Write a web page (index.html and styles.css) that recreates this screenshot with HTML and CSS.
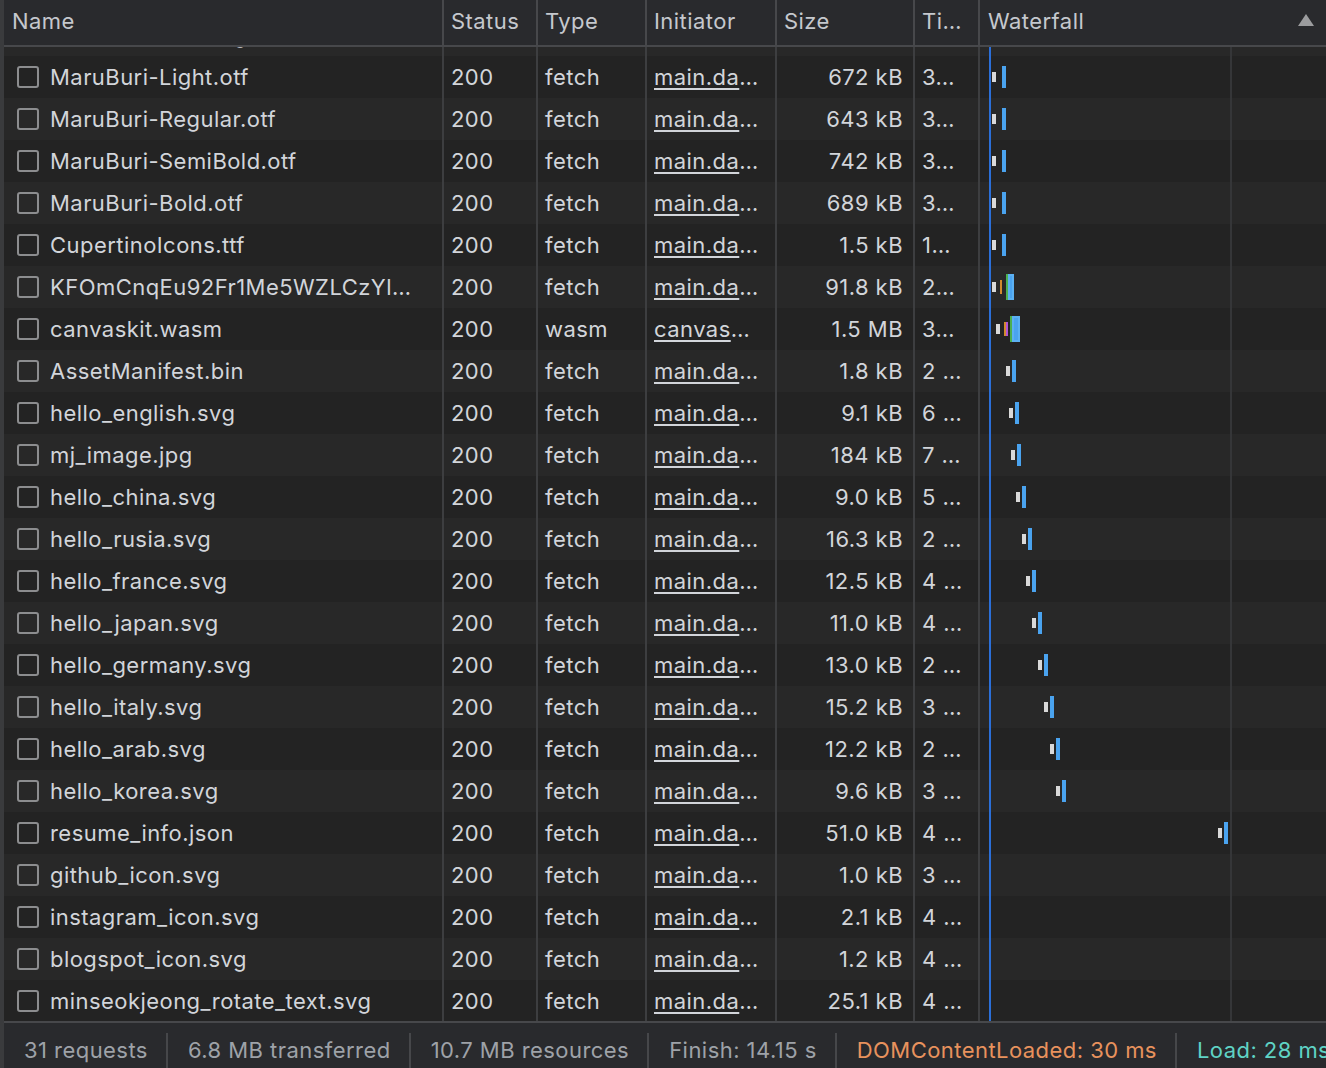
FILE: index.html
```html
<!DOCTYPE html>
<html>
<head>
<meta charset="utf-8">
<link rel="stylesheet" href="styles.css">
</head>
<body>
<div class="panel">
  <div class="row head">
    <div class="c name">Name</div>
    <div class="c status">Status</div>
    <div class="c type">Type</div>
    <div class="c init">Initiator</div>
    <div class="c hsize">Size</div>
    <div class="c time">Ti…</div>
    <div class="c wf">Waterfall<span class="sort"></span></div>
  </div>
  <div class="body">
    <div class="rows">
      <div class="row"><div class="c name"><span class="cb"></span>MaruBuri-ExtraLight.otf</div><div class="c status"></div><div class="c type"></div><div class="c init"></div><div class="c size"></div><div class="c time"></div><div class="c wf"></div></div>
      <div class="row"><div class="c name"><span class="cb"></span>MaruBuri-Light.otf</div><div class="c status">200</div><div class="c type">fetch</div><div class="c init"><span class="lk">main.da</span>…</div><div class="c size">672 kB</div><div class="c time">3…</div><div class="c wf"><i class="b w" style="left:12px"></i><i class="b r" style="left:22px"></i></div></div>
      <div class="row"><div class="c name"><span class="cb"></span>MaruBuri-Regular.otf</div><div class="c status">200</div><div class="c type">fetch</div><div class="c init"><span class="lk">main.da</span>…</div><div class="c size">643 kB</div><div class="c time">3…</div><div class="c wf"><i class="b w" style="left:12px"></i><i class="b r" style="left:22px"></i></div></div>
      <div class="row"><div class="c name"><span class="cb"></span>MaruBuri-SemiBold.otf</div><div class="c status">200</div><div class="c type">fetch</div><div class="c init"><span class="lk">main.da</span>…</div><div class="c size">742 kB</div><div class="c time">3…</div><div class="c wf"><i class="b w" style="left:12px"></i><i class="b r" style="left:22px"></i></div></div>
      <div class="row"><div class="c name"><span class="cb"></span>MaruBuri-Bold.otf</div><div class="c status">200</div><div class="c type">fetch</div><div class="c init"><span class="lk">main.da</span>…</div><div class="c size">689 kB</div><div class="c time">3…</div><div class="c wf"><i class="b w" style="left:12px"></i><i class="b r" style="left:22px"></i></div></div>
      <div class="row"><div class="c name"><span class="cb"></span>CupertinoIcons.ttf</div><div class="c status">200</div><div class="c type">fetch</div><div class="c init"><span class="lk">main.da</span>…</div><div class="c size">1.5 kB</div><div class="c time">1…</div><div class="c wf"><i class="b w" style="left:12px"></i><i class="b r" style="left:22px"></i></div></div>
      <div class="row"><div class="c name"><span class="cb"></span>KFOmCnqEu92Fr1Me5WZLCzYl…</div><div class="c status">200</div><div class="c type">fetch</div><div class="c init"><span class="lk">main.da</span>…</div><div class="c size">91.8 kB</div><div class="c time">2…</div><div class="c wf"><i class="b w" style="left:12px"></i><i class="b o" style="left:20px"></i><i class="b g" style="left:26px"></i><i class="b big" style="left:28px;width:6px"></i></div></div>
      <div class="row"><div class="c name"><span class="cb"></span>canvaskit.wasm</div><div class="c status">200</div><div class="c type">wasm</div><div class="c init"><span class="lk">canvas</span>…</div><div class="c size">1.5 MB</div><div class="c time">3…</div><div class="c wf"><i class="b w" style="left:16px"></i><i class="b o" style="left:24px"></i><i class="b p" style="left:26px"></i><i class="b g" style="left:30px"></i><i class="b big" style="left:32px;width:8px"></i></div></div>
      <div class="row"><div class="c name"><span class="cb"></span>AssetManifest.bin</div><div class="c status">200</div><div class="c type">fetch</div><div class="c init"><span class="lk">main.da</span>…</div><div class="c size">1.8 kB</div><div class="c time">2 …</div><div class="c wf"><i class="b w" style="left:26px"></i><i class="b r" style="left:32px"></i></div></div>
      <div class="row"><div class="c name"><span class="cb"></span>hello_english.svg</div><div class="c status">200</div><div class="c type">fetch</div><div class="c init"><span class="lk">main.da</span>…</div><div class="c size">9.1 kB</div><div class="c time">6 …</div><div class="c wf"><i class="b w" style="left:29px"></i><i class="b r" style="left:35px"></i></div></div>
      <div class="row"><div class="c name"><span class="cb"></span>mj_image.jpg</div><div class="c status">200</div><div class="c type">fetch</div><div class="c init"><span class="lk">main.da</span>…</div><div class="c size">184 kB</div><div class="c time">7 …</div><div class="c wf"><i class="b w" style="left:31px"></i><i class="b r" style="left:37px"></i></div></div>
      <div class="row"><div class="c name"><span class="cb"></span>hello_china.svg</div><div class="c status">200</div><div class="c type">fetch</div><div class="c init"><span class="lk">main.da</span>…</div><div class="c size">9.0 kB</div><div class="c time">5 …</div><div class="c wf"><i class="b w" style="left:36px"></i><i class="b r" style="left:42px"></i></div></div>
      <div class="row"><div class="c name"><span class="cb"></span>hello_rusia.svg</div><div class="c status">200</div><div class="c type">fetch</div><div class="c init"><span class="lk">main.da</span>…</div><div class="c size">16.3 kB</div><div class="c time">2 …</div><div class="c wf"><i class="b w" style="left:42px"></i><i class="b r" style="left:48px"></i></div></div>
      <div class="row"><div class="c name"><span class="cb"></span>hello_france.svg</div><div class="c status">200</div><div class="c type">fetch</div><div class="c init"><span class="lk">main.da</span>…</div><div class="c size">12.5 kB</div><div class="c time">4 …</div><div class="c wf"><i class="b w" style="left:46px"></i><i class="b r" style="left:52px"></i></div></div>
      <div class="row"><div class="c name"><span class="cb"></span>hello_japan.svg</div><div class="c status">200</div><div class="c type">fetch</div><div class="c init"><span class="lk">main.da</span>…</div><div class="c size">11.0 kB</div><div class="c time">4 …</div><div class="c wf"><i class="b w" style="left:52px"></i><i class="b r" style="left:58px"></i></div></div>
      <div class="row"><div class="c name"><span class="cb"></span>hello_germany.svg</div><div class="c status">200</div><div class="c type">fetch</div><div class="c init"><span class="lk">main.da</span>…</div><div class="c size">13.0 kB</div><div class="c time">2 …</div><div class="c wf"><i class="b w" style="left:58px"></i><i class="b r" style="left:64px"></i></div></div>
      <div class="row"><div class="c name"><span class="cb"></span>hello_italy.svg</div><div class="c status">200</div><div class="c type">fetch</div><div class="c init"><span class="lk">main.da</span>…</div><div class="c size">15.2 kB</div><div class="c time">3 …</div><div class="c wf"><i class="b w" style="left:64px"></i><i class="b r" style="left:70px"></i></div></div>
      <div class="row"><div class="c name"><span class="cb"></span>hello_arab.svg</div><div class="c status">200</div><div class="c type">fetch</div><div class="c init"><span class="lk">main.da</span>…</div><div class="c size">12.2 kB</div><div class="c time">2 …</div><div class="c wf"><i class="b w" style="left:70px"></i><i class="b r" style="left:76px"></i></div></div>
      <div class="row"><div class="c name"><span class="cb"></span>hello_korea.svg</div><div class="c status">200</div><div class="c type">fetch</div><div class="c init"><span class="lk">main.da</span>…</div><div class="c size">9.6 kB</div><div class="c time">3 …</div><div class="c wf"><i class="b w" style="left:76px"></i><i class="b r" style="left:82px"></i></div></div>
      <div class="row"><div class="c name"><span class="cb"></span>resume_info.json</div><div class="c status">200</div><div class="c type">fetch</div><div class="c init"><span class="lk">main.da</span>…</div><div class="c size">51.0 kB</div><div class="c time">4 …</div><div class="c wf"><i class="b w" style="left:238px"></i><i class="b r" style="left:244px"></i></div></div>
      <div class="row"><div class="c name"><span class="cb"></span>github_icon.svg</div><div class="c status">200</div><div class="c type">fetch</div><div class="c init"><span class="lk">main.da</span>…</div><div class="c size">1.0 kB</div><div class="c time">3 …</div><div class="c wf"></div></div>
      <div class="row"><div class="c name"><span class="cb"></span>instagram_icon.svg</div><div class="c status">200</div><div class="c type">fetch</div><div class="c init"><span class="lk">main.da</span>…</div><div class="c size">2.1 kB</div><div class="c time">4 …</div><div class="c wf"></div></div>
      <div class="row"><div class="c name"><span class="cb"></span>blogspot_icon.svg</div><div class="c status">200</div><div class="c type">fetch</div><div class="c init"><span class="lk">main.da</span>…</div><div class="c size">1.2 kB</div><div class="c time">4 …</div><div class="c wf"></div></div>
      <div class="row"><div class="c name"><span class="cb"></span>minseokjeong_rotate_text.svg</div><div class="c status">200</div><div class="c type">fetch</div><div class="c init"><span class="lk">main.da</span>…</div><div class="c size">25.1 kB</div><div class="c time">4 …</div><div class="c wf"></div></div>
    </div>
    <div class="vline blue"></div>
    <div class="vline grid"></div>
  </div>
  <div class="footer">
    <div class="fi">31 requests</div>
    <div class="fi">6.8 MB transferred</div>
    <div class="fi">10.7 MB resources</div>
    <div class="fi">Finish: 14.15 s</div>
    <div class="fi dcl">DOMContentLoaded: 30 ms</div>
    <div class="fi load">Load: 28 ms</div>
  </div>
</div>
</body>
</html>
```
FILE: styles.css
```css
html, body {
  margin: 0;
  padding: 0;
  background: #232323;
}
body {
  width: 1326px;
  height: 1068px;
  overflow: hidden;
  font-family: "Inter", "Liberation Sans", sans-serif;
  font-size: 22px;
  letter-spacing: 0.45px;
  color: #d2d5da;
}
.panel {
  display: flex;
  flex-direction: column;
  height: 1068px;
  border-left: 4px solid #3a3b3d;
  box-sizing: border-box;
}
.row {
  display: grid;
  grid-template-columns: 440px 94px 109px 130px 138px 65px 1fr;
  height: 42px;
}
.c {
  box-sizing: border-box;
  border-right: 2px solid #3d3e40;
  padding: 0 0 0 7px;
  display: flex;
  align-items: center;
  white-space: nowrap;
  overflow: hidden;
}
.c.wf { border-right: none; position: relative; }
.head {
  height: 47px;
  background: #292a2d;
  border-bottom: 2px solid #47484b;
  box-sizing: border-box;
  color: #c5c8cd;
}
.head .c { border-right-color: #47484b; padding-bottom: 4px; }
.head .name { padding-left: 8px; }
.head .wf { padding-left: 8px; }
.sort {
  position: absolute;
  right: 12px;
  top: 14px;
  width: 0;
  height: 0;
  border-left: 8px solid transparent;
  border-right: 8px solid transparent;
  border-bottom: 12px solid #9b9c9e;
}
.body {
  flex: 1;
  position: relative;
  overflow: hidden;
}
.rows { margin-top: -33px; }
.rows .row:nth-child(odd) { background: #282828; }
.rows .row:nth-child(even) { background: #232323; }
.name { padding-left: 13px; }
.cb {
  width: 18px;
  height: 18px;
  border: 2px solid #8c8d8f;
  border-radius: 3px;
  margin-right: 11px;
  flex: none;
}
.size { justify-content: flex-end; padding-right: 10px; }
.lk { text-decoration: underline; text-underline-offset: 3px; text-decoration-thickness: 2px; }
.b {
  position: absolute;
  top: 50%;
  display: block;
}
.b.w { width: 4px; height: 10px; margin-top: -5px; background: #d9d9d9; }
.b.r { width: 4px; height: 22px; margin-top: -11px; background: #4aa3ef; }
.b.o { width: 2px; height: 14px; margin-top: -7px; background: #d18a2e; }
.b.p { width: 2px; height: 14px; margin-top: -7px; background: #b054d6; }
.b.g { width: 2px; height: 26px; margin-top: -13px; background: #4caf50; }
.b.big { height: 26px; margin-top: -13px; background: #4aa3ef; box-shadow: inset 0 0 0 2px #5bb0f2; }
.vline {
  position: absolute;
  top: 0;
  bottom: 0;
  width: 2px;
}
.vline.blue { left: 985px; background: #2b6fd8; }
.vline.grid { left: 1226px; background: #353638; }
.footer {
  height: 47px;
  box-sizing: border-box;
  background: #292a2d;
  border-top: 2px solid #47484b;
  display: flex;
  color: #9ea2a8;
  white-space: nowrap;
  letter-spacing: 0.45px;
}
.fi {
  padding: 0 18px 0 20px;
  margin-top: 10px;
  border-right: 2px solid #46474a;
  display: flex;
  align-items: center;
  padding-bottom: 2px;
}
.fi.dcl { color: #e8925d; }
.fi.load { color: #5fd3c5; border-right: none; }
```
